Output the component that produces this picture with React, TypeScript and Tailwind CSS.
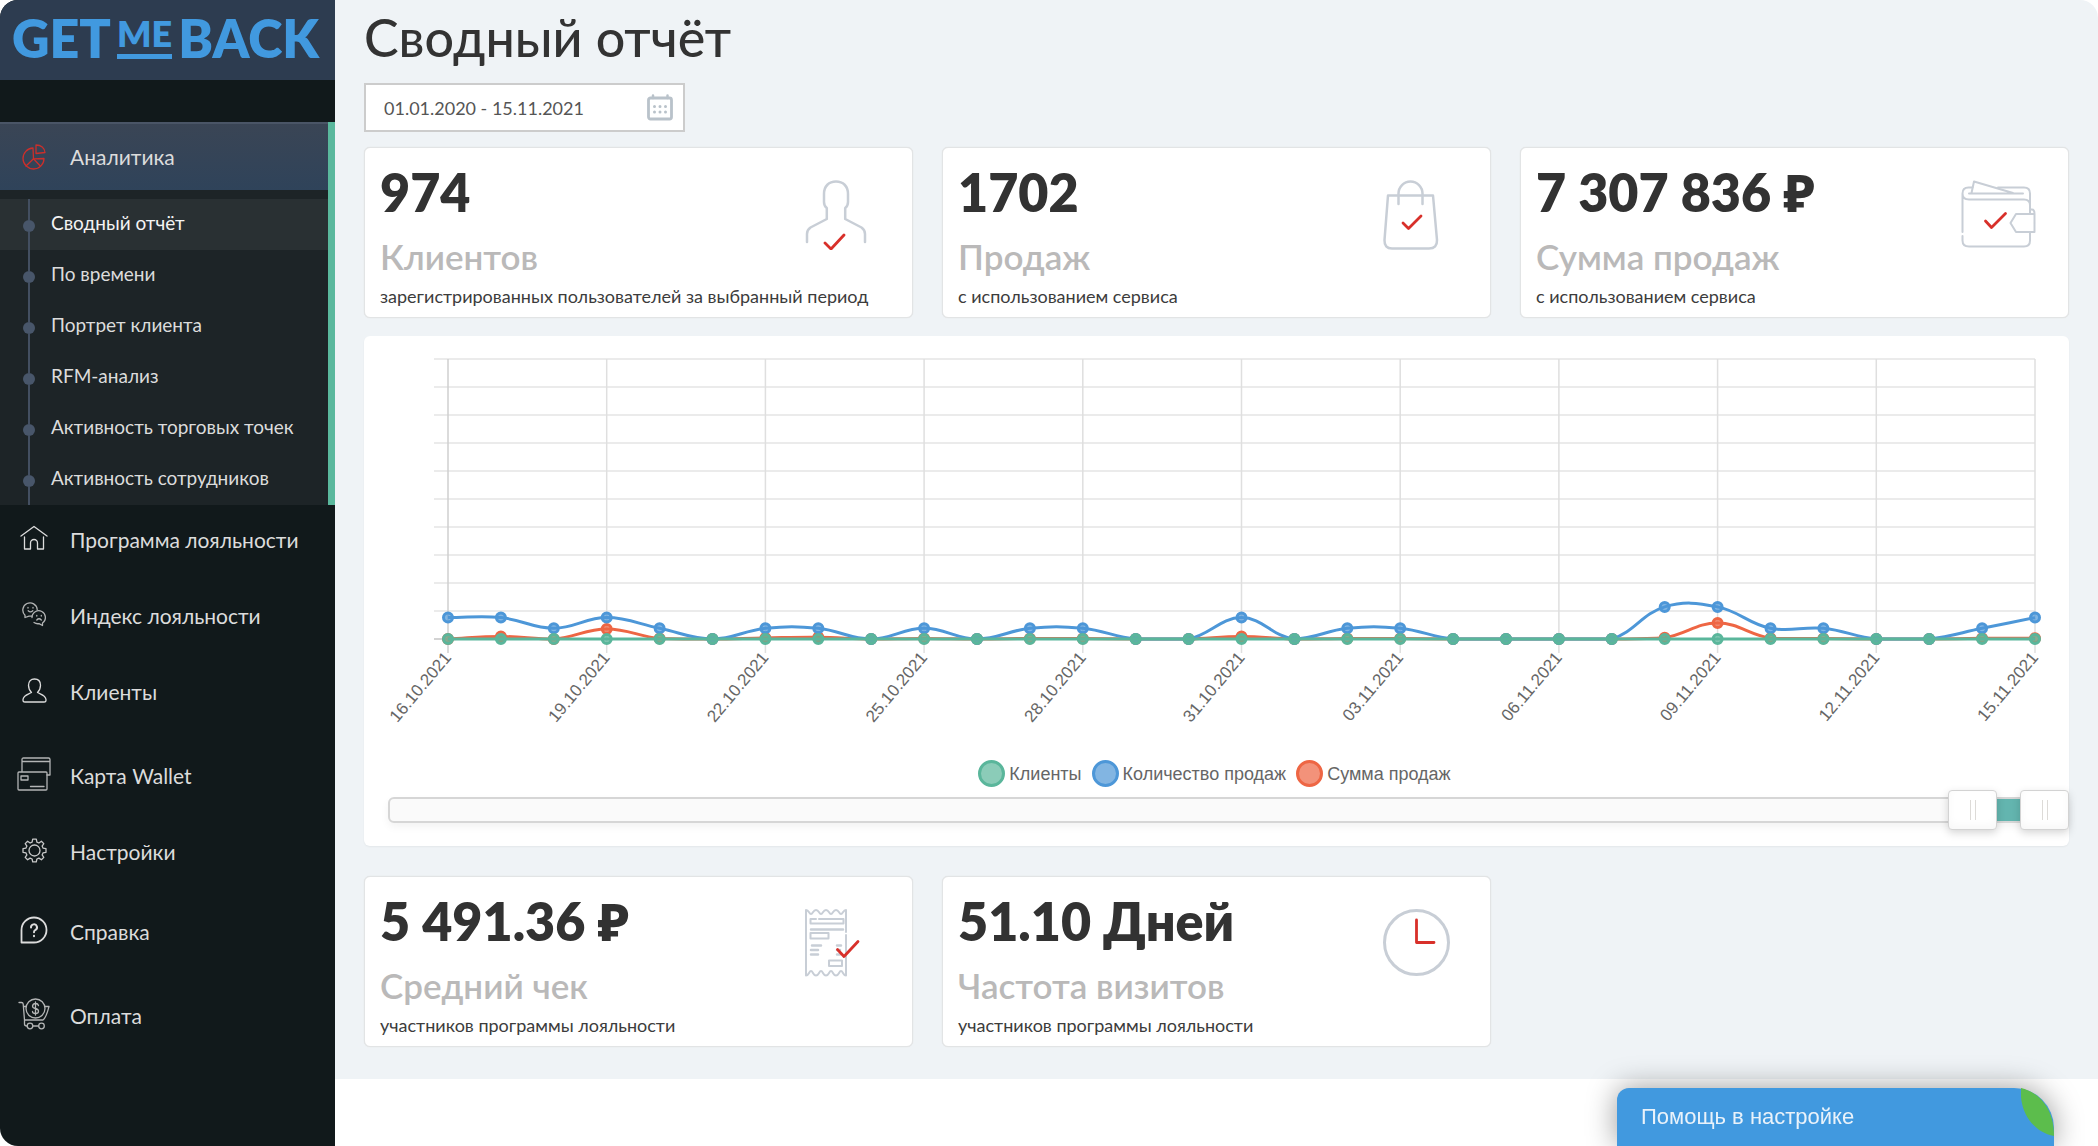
import { useState } from "react";
import type { ReactNode } from "react";
import clsx from "clsx";

const TOTAL_DAYS = 684;

const subItems = [
    "Сводный отчёт",
    "По времени",
    "Портрет клиента",
    "RFM-анализ",
    "Активность торговых точек",
    "Активность сотрудников",
];

const clients = new Array(31).fill(0);
const sales = [2, 2, 1, 2, 1, 0, 1, 1, 0, 1, 0, 1, 1, 0, 0, 2, 0, 1, 1, 0, 0, 0, 0, 3, 3, 1, 1, 0, 0, 1, 2];
const revenue = [0, 0.24, 0, 0.94, 0.05, 0, 0.1, 0.16, 0, 0.05, 0, 0.05, 0.05, 0, 0, 0.24, 0, 0.05, 0.05, 0, 0, 0, 0, 0.12, 1.5, 0.08, 0.05, 0, 0, 0.06, 0.08];

const dateLabels = [
    "16.10.2021", "19.10.2021", "22.10.2021", "25.10.2021", "28.10.2021", "31.10.2021",
    "03.11.2021", "06.11.2021", "09.11.2021", "12.11.2021", "15.11.2021",
];

const series = [
    { name: "Сумма продаж", color: "#ee6644", data: revenue },
    { name: "Количество продаж", color: "#4d97d8", data: sales },
    { name: "Клиенты", color: "#5ab69b", data: clients },
];

const legend = [
    { name: "Клиенты", className: "border-[#5ab69b] bg-[#8bccb8]" },
    { name: "Количество продаж", className: "border-[#4d97d8] bg-[#82b5e2]" },
    { name: "Сумма продаж", className: "border-[#ee6644] bg-[#f3927a]" },
];

// Plot area inside the chart's viewBox
const LEFT = 84;
const RIGHT = 1671;
const TOP = 23;
const BOTTOM = 303;
const UNIT = 10.7;
const STEP = (RIGHT - LEFT) / 30;

const px = (i: number) => LEFT + i * STEP;
const py = (v: number) => BOTTOM - v * UNIT;
const clampY = (y: number) => Math.min(BOTTOM, Math.max(TOP, y));

// Smooth line, control points weighted by the distance to the neighbours
function smoothPath(values: number[], tension = 0.4) {
    const pts = values.map((v, i) => ({ x: px(i), y: py(v) }));
    const controls = pts.map((p, i) => {
        const prev = pts[i - 1] || p;
        const next = pts[i + 1] || p;
        const d1 = Math.hypot(p.x - prev.x, p.y - prev.y);
        const d2 = Math.hypot(next.x - p.x, next.y - p.y);
        const a = (tension * d1) / (d1 + d2);
        const b = (tension * d2) / (d1 + d2);
        return {
            inX: p.x - a * (next.x - prev.x),
            inY: clampY(p.y - a * (next.y - prev.y)),
            outX: p.x + b * (next.x - prev.x),
            outY: clampY(p.y + b * (next.y - prev.y)),
        };
    });
    return pts.reduce((d, p, i) => {
        if (i === 0) return `M${p.x} ${p.y}`;
        const c = controls[i - 1];
        const n = controls[i];
        return `${d} C${c.outX} ${c.outY} ${n.inX} ${n.inY} ${p.x} ${p.y}`;
    }, "");
}

function Icon({ w, h, children, className }: { w: number; h: number; children: ReactNode; className?: string }) {
    return (
        <svg
            width={w}
            height={h}
            viewBox={`0 0 ${w} ${h}`}
            fill="none"
            stroke="currentColor"
            strokeWidth="1.3"
            strokeLinecap="round"
            strokeLinejoin="round"
            aria-hidden="true"
            className={className}
        >
            {children}
        </svg>
    );
}

const PieIcon = () => (
    <Icon w={24} h={26} className="text-[#cb2f2b]">
        <path d="M11 4A10.5 10.5 0 1 0 22 14.5L11.5 14.8Z" />
        <path d="M11.5 14.8 4 22M11.5 14.8 18.5 22.3" />
        <path d="M14 1V9.5L23 8.5C22.5 4 19 1 14 1Z" />
    </Icon>
);

const HomeIcon = () => (
    <Icon w={28} h={26}>
        <path d="M1 11 14 1.500 27 11" />
        <path d="M4.500 12V24H10.500V18A3.500 3.500 0 0 1 17.500 18V24H23.500V12" />
    </Icon>
);

const ChatIcon = () => (
    <Icon w={25} h={26} className="opacity-80">
        <path d="M3 16.500V14.200A7.200 7.200 0 1 1 15.200 8.500M3 16.500 7 15.200H10" />
        <path d="M10 16.500A6.700 6.700 0 1 1 20.500 22V24.500L17 22.600C15.500 23 13.500 22.500 12 21.500" />
        <path d="M6 6.500V7M11 6.500V7M6.200 9.800Q8.500 12 10.800 9.800M14.800 14.500V15M19.300 14.500V15M14.800 19Q17 16.500 19.300 19" />
    </Icon>
);

const UserIcon = () => (
    <Icon w={25} h={25}>
        <path d="M9.500 14.500C7.500 12.500 6.500 10 6.500 7.300C6.500 3.500 8.800 1 12.500 1S18.500 3.500 18.500 7.300C18.500 10 17.500 12.500 15.500 14.500C19 16.500 23.500 17 24 21.500C24.100 23.400 23.500 24 22 24H3C1.500 24 .9 23.400 1 21.500C1.500 17 6 16.500 9.500 14.500Z" />
    </Icon>
);

const CardsIcon = () => (
    <Icon w={34} h={34} className="opacity-80">
        <path d="M5 14.500V2.500Q5 1 6.500 1H31.500Q33 1 33 2.500V18H30M5 4.500H33" />
        <rect x="1" y="15" width="29" height="18" rx="1" />
        <rect x="4" y="19" width="7" height="4" />
        <path d="M13.500 29.500H27" />
    </Icon>
);

const GearIcon = () => (
    <Icon w={25} h={25} className="opacity-90">
        <circle cx="12.5" cy="12.5" r="5.500" />
        <path d="M10.700 1.200H14.300L14.900 4.200L16.900 5L19.400 3.200L21.800 5.600L20.100 8.100L21 10.100L24 10.700V14.300L21 14.900L20.100 16.900L21.800 19.400L19.400 21.800L16.900 20.100L14.900 21L14.300 23.900H10.700L10.100 21L8.100 20.100L5.600 21.800L3.200 19.400L4.900 16.900L4 14.900L1 14.300V10.700L4 10.100L4.900 8.100L3.200 5.600L5.600 3.200L8.100 5L10.100 4.200Z" />
    </Icon>
);

const HelpIcon = () => (
    <Icon w={28} h={28}>
        <path strokeWidth="1.800" d="M1.500 26.500V14A12.500 12.500 0 1 1 14 26.500Z" />
        <path strokeWidth="2" d="M11 11.500A3 3 0 1 1 15.300 14Q14 14.800 14 16.200M14 19.800V20.200" />
    </Icon>
);

const CartIcon = () => (
    <Icon w={32} h={32} className="opacity-80">
        <path d="M1 4.500H3.500Q5 4.500 5.200 6L6.500 22H25C28 20 29.500 14 31 8.500H27.500M5.500 8.500H8M6.500 22V26Q6.500 28 9 28" />
        <circle cx="17.500" cy="10.500" r="9.500" />
        <path d="M20.500 7.500Q20 5.500 17.500 5.500T14.500 8Q14.500 10 17.500 10.500T20.500 13.300Q20.500 15.500 17.500 15.500T14.500 13.500M17.500 4V17" />
        <circle cx="12" cy="28" r="2.800" />
        <circle cx="23.500" cy="28" r="2.800" />
        <path d="M15 28H20.500" />
    </Icon>
);

const menu = [
    { title: "Программа лояльности", icon: <HomeIcon />, space: "mb-11" },
    { title: "Индекс лояльности", icon: <ChatIcon />, space: "mb-11" },
    { title: "Клиенты", icon: <UserIcon />, space: "mb-13" },
    { title: "Карта Wallet", icon: <CardsIcon />, space: "mb-11" },
    { title: "Настройки", icon: <GearIcon />, space: "mb-12" },
    { title: "Справка", icon: <HelpIcon />, space: "mb-13" },
    { title: "Оплата", icon: <CartIcon />, space: "mb-12" },
];

function StatIcon({ children, check }: { children: ReactNode; check?: string }) {
    return (
        <svg width="75" height="70" viewBox="0 0 75 70" fill="none" strokeLinecap="round" strokeLinejoin="round" aria-hidden="true" className="mt-4 shrink-0">
            <g stroke="#c8ced6" strokeWidth="2.500">{children}</g>
            {check && <path d={check} stroke="#d8302a" strokeWidth="2.800" />}
        </svg>
    );
}

const stats = [
    {
        value: "974",
        label: "Клиентов",
        note: "зарегистрированных пользователей за выбранный период",
        icon: (
            <StatIcon check="M20 63 26 69 39 55">
                <path d="M2 62V54Q2 50 5.500 47.500L21.800 39V28Q19 26 19 22V14C19 6 24 1.500 31 1.500S43 6 43 14V22Q43 26 40.200 28V39L56.500 47.500Q60 50 60 54V62" />
            </StatIcon>
        ),
    },
    {
        value: "1702",
        label: "Продаж",
        note: "с использованием сервиса",
        icon: (
            <StatIcon check="M20 43 25.500 48.500 38 36">
                <path d="M5 15.500H50L54 60Q54.300 68.500 46 68.500H9Q1.200 68.500 1.500 60Z" />
                <path d="M15.500 24V13.500A12 12 0 0 1 39.500 13.500V24" />
            </StatIcon>
        ),
    },
    {
        value: "7 307 836 ₽",
        label: "Сумма продаж",
        note: "с использованием сервиса",
        icon: (
            <StatIcon check="M24.500 41 30.500 47.500 44.500 33.500">
                <g strokeWidth="2">
                    <path d="M1.500 52V13.500Q1.500 7.500 7.500 7.500H11.500M37 7.500H63Q69 7.500 69 13.500V34M1.500 13.500Q1.500 19.500 8 19.500H63Q69 19.500 69 25" />
                    <path d="M8 13.500H62M10.500 13 13 1.500 52 13" />
                    <path d="M1.500 56V60.500Q1.500 66.500 8 66.500H63Q69 66.500 69 60.500V52" />
                    <path d="M49.500 43 55 34H73.500V52H55ZM69 29.500H71Q73.500 29.500 73.500 34" />
                </g>
            </StatIcon>
        ),
    },
    {
        value: "5 491.36 ₽",
        label: "Средний чек",
        note: "участников программы лояльности",
        icon: (
            <StatIcon check="M32.500 40.500 39 47.500 53 32.500">
                <g strokeWidth="2">
                    <path d="M41 23V1C38 1 38 5 36 5S34 1 31 1S28 5 26 5S24 1 21 1S18 5 16 5S14 1 11 1S8 5 6 5S4 1 1 1V66.500C4 66.500 4 62 6 62S8 66.500 11 66.500S14 62 16 62S18 66.500 21 66.500S24 62 26 62S28 66.500 31 66.500S34 62 36 62S38 66.500 41 66.500V26" />
                    <path d="M11 10H5.500V14.500H38.500V10H14" />
                    <path d="M5.500 24H23.500V29.500H5.500ZM24 51.500H37V57H24Z" />
                </g>
                <path d="M6 20.500H38M7 36.500H16M32 36.500H36M6 41H13M6 45.500H13M32 45.500H35M32 41H35" />
            </StatIcon>
        ),
    },
    {
        value: "51.10 Дней",
        label: "Частота визитов",
        note: "участников программы лояльности",
        icon: (
            <StatIcon check="M33.500 11V33.500H51">
                <circle cx="33.500" cy="33.500" r="32" strokeWidth="3" />
            </StatIcon>
        ),
    },
];

function StatCard({ value, label, note, icon }: (typeof stats)[number]) {
    return (
        <section className="rounded-md border border-[#e2e4e5] bg-white pt-4 pr-8 pb-[9px] pl-[15px] shadow-[0_0_1px_#d8d8d8]">
            <div className="flex items-start justify-between">
                <div className="whitespace-nowrap">
                    <p className="text-[52px] leading-[56px] font-extrabold text-[#323232]">{value}</p>
                    <h2 className="mt-4 text-[35px] leading-10 font-semibold text-[#bab9b9]">{label}</h2>
                </div>
                {icon}
            </div>
            <p className="mt-2 text-lg leading-6 whitespace-nowrap text-[#3c3c3c]">{note}</p>
        </section>
    );
}

function Chart() {
    return (
        <svg viewBox="0 0 1705 408" className="block h-auto w-full" role="img" aria-label="Клиенты, количество и сумма продаж">
            {Array.from({ length: 11 }, (_, i) => (
                <line key={i} x1={LEFT - 14} x2={RIGHT} y1={TOP + i * 28} y2={TOP + i * 28} stroke={i === 10 ? "#c4c4c4" : "#e4e4e4"} strokeWidth="1.5" />
            ))}
            {dateLabels.map((label, i) => (
                <g key={label}>
                    <line x1={px(i * 3)} x2={px(i * 3)} y1={TOP} y2={BOTTOM + 14} stroke={i === 0 ? "#cfcfcf" : "#dfdfdf"} strokeWidth="1.5" />
                    <text
                        transform={`translate(${px(i * 3) + 4} ${BOTTOM + 19}) rotate(-50)`}
                        textAnchor="end"
                        fontSize="17"
                        fill="#666"
                        className="font-['Liberation_Sans',sans-serif]"
                    >
                        {label}
                    </text>
                </g>
            ))}
            {series.map((s) => (
                <g key={s.name} stroke={s.color}>
                    <path d={smoothPath(s.data)} fill="none" strokeWidth="3" />
                    {s.data.map((v, i) => (
                        <circle key={i} cx={px(i)} cy={py(v)} r="4.500" strokeWidth="3" fill={s.color} fillOpacity="0.7" />
                    ))}
                </g>
            ))}
        </svg>
    );
}

const thumb =
    "pointer-events-none absolute inset-x-0 -top-2 m-0 h-10 w-full appearance-none bg-transparent [&::-webkit-slider-thumb]:pointer-events-auto [&::-webkit-slider-thumb]:h-10 [&::-webkit-slider-thumb]:w-[49px] [&::-webkit-slider-thumb]:cursor-pointer [&::-webkit-slider-thumb]:appearance-none [&::-webkit-slider-thumb]:rounded [&::-webkit-slider-thumb]:border [&::-webkit-slider-thumb]:border-solid [&::-webkit-slider-thumb]:border-[#d3d3d3] [&::-webkit-slider-thumb]:bg-white [&::-webkit-slider-thumb]:bg-[linear-gradient(90deg,#dddbd8_0_1px,transparent_1px_5px,#dddbd8_5px_6px)] [&::-webkit-slider-thumb]:bg-[length:6px_20px] [&::-webkit-slider-thumb]:bg-center [&::-webkit-slider-thumb]:bg-no-repeat [&::-webkit-slider-thumb]:shadow-[0_3px_8px_#00000028,inset_0_-4px_8px_#00000008]";

function RangeSlider() {
    const [from, setFrom] = useState(654);
    const [to, setTo] = useState(TOTAL_DAYS);

    return (
        <div className="relative ml-6 h-[26px] rounded-md border-2 border-[#d6d6d6] bg-[#fafafa] shadow-[0_4px_8px_#0000000d]">
            <div
                className="absolute inset-y-0 bg-[#63b5af]"
                style={{ left: `${(from / TOTAL_DAYS) * 100}%`, right: `${((TOTAL_DAYS - to) / TOTAL_DAYS) * 100}%` }}
            />
            <div className="absolute -inset-x-0.5 top-[-1px]">
                <input type="range" aria-label="Начало периода" min={0} max={TOTAL_DAYS} value={from} onChange={(e) => setFrom(Math.min(+e.target.value, to))} className={thumb} />
                <input type="range" aria-label="Конец периода" min={0} max={TOTAL_DAYS} value={to} onChange={(e) => setTo(Math.max(+e.target.value, from))} className={thumb} />
            </div>
        </div>
    );
}

function Sidebar() {
    return (
        <aside className="w-[335px] shrink-0 bg-[#11191b] text-[#dcdcdc]">
            <a href="#" aria-label="GETMEBACK" className="flex h-20 items-start gap-1.5 bg-[#2d3c50] pl-3 font-extrabold text-[#4199df]">
                <span className="text-[52px] leading-[76px]">GET</span>
                <span className="mt-[15px] h-11 border-b-[5px] border-[#4199df] text-[36px] leading-9">ME</span>
                <span className="text-[52px] leading-[76px]">BACK</span>
            </a>
            <nav className="pt-[42px]">
                <div className="border-r-[7px] border-[#5ab89d] bg-[#1d2427]">
                    <a href="#" className="flex h-[68px] items-center gap-[18px] border-t-2 border-[#4a5566] bg-linear-to-b from-[#3a4555] to-[#2f435a] pl-4 text-[21px]">
                        <span className="flex w-9 justify-center"><PieIcon /></span>
                        Аналитика
                    </a>
                    <ul className="pt-[9px]">
                        {subItems.map((item, i) => (
                            <li key={item}>
                                <a href="#" className={clsx("flex h-[51px] items-center pl-[23px] text-[19px]", i === 0 && "bg-[#293033] text-[#f4f4f4]")}>
                                    <span className="flex h-full w-3 flex-col items-center">
                                        <span className="h-[21px] w-0.5 bg-[#434f61]" />
                                        <span className="h-3 w-3 rounded-full bg-[#48566a]" />
                                        <span className="w-0.5 flex-1 bg-[#434f61]" />
                                    </span>
                                    <span className="pb-0.5 pl-4 whitespace-nowrap">{item}</span>
                                </a>
                            </li>
                        ))}
                    </ul>
                </div>
                <ul className="pt-[19px]">
                    {menu.map((item) => (
                        <li key={item.title} className={item.space}>
                            <a href="#" className="flex h-8 items-start gap-[18px] pl-4 text-[21px] leading-8">
                                <span className="flex h-7 w-9 items-center justify-center">{item.icon}</span>
                                {item.title}
                            </a>
                        </li>
                    ))}
                </ul>
            </nav>
        </aside>
    );
}

export default function App() {
    const [period, setPeriod] = useState("01.01.2020 - 15.11.2021");

    return (
        <div className="flex min-h-screen overflow-hidden rounded-[18px] bg-white font-[Lato,'Noto_Sans',sans-serif]">
            <Sidebar />
            <main className="min-w-0 flex-1">
                <div className="bg-[#eff3f6] px-[29px] pb-8">
                    <h1 className="text-[52px] leading-[74px] font-medium text-[#333]">Сводный отчёт</h1>
                    <div className="mt-[9px] flex h-[49px] w-[321px] items-center border-2 border-[#cccccc] bg-white pr-2.5 pl-[18px]">
                        <input type="text" aria-label="Период" value={period} onChange={(e) => setPeriod(e.target.value)} className="min-w-0 flex-1 text-lg text-[#555] outline-none" />
                        <svg width="26" height="27" viewBox="0 0 26 27" fill="none" stroke="#b9c2ca" strokeLinecap="round" aria-hidden="true">
                            <rect x="1.500" y="4" width="23" height="21" rx="2" strokeWidth="2.800" />
                            <path d="M6 1.500V4M20.500 1.500V4" strokeWidth="2.500" />
                            <path d="M7.500 12.500V12.600M13 12.500V12.600M18.500 12.500V12.600M7.500 18V18.100M13 18V18.100M18.500 18V18.100" strokeWidth="3" />
                        </svg>
                    </div>
                    <div className="mt-[15px] grid grid-cols-3 gap-[29px]">
                        {stats.slice(0, 3).map((s) => <StatCard key={s.label} {...s} />)}
                    </div>
                    <div className="mt-[18px] rounded-md bg-white pb-[23px] shadow-[0_1px_2px_#0000000d]">
                        <Chart />
                        <div className="mt-4 mb-[10px] flex h-[27px] justify-center gap-[10px] pr-1 font-['Liberation_Sans',sans-serif] text-lg text-[#666]">
                            {legend.map((item) => (
                                <button key={item.name} type="button" className="flex items-center gap-1">
                                    <span className={clsx("h-[27px] w-[27px] rounded-full border-[3px]", item.className)} />
                                    {item.name}
                                </button>
                            ))}
                        </div>
                        <RangeSlider />
                    </div>
                    <div className="mt-[30px] grid grid-cols-3 gap-[29px]">
                        {stats.slice(3).map((s) => <StatCard key={s.label} {...s} />)}
                    </div>
                </div>
            </main>
            <button type="button" className="fixed right-11 bottom-0 flex h-[58px] w-[437px] items-start rounded-tl-xl rounded-tr-[40px] bg-[#4199df] pt-[13px] pl-6 text-left font-['Liberation_Sans',sans-serif] text-[22px] leading-8 text-[#e9f2fa] shadow-[0_0_30px_#00000066]">
                Помощь в настройке
                <svg width="33" height="48" viewBox="0 0 33 48" aria-hidden="true" className="absolute top-0 right-0">
                    <path d="M0 0C20 5 33 22 33 48C12 44 -2 24 0 0Z" fill="#5cbd4c" />
                </svg>
            </button>
        </div>
    );
}
